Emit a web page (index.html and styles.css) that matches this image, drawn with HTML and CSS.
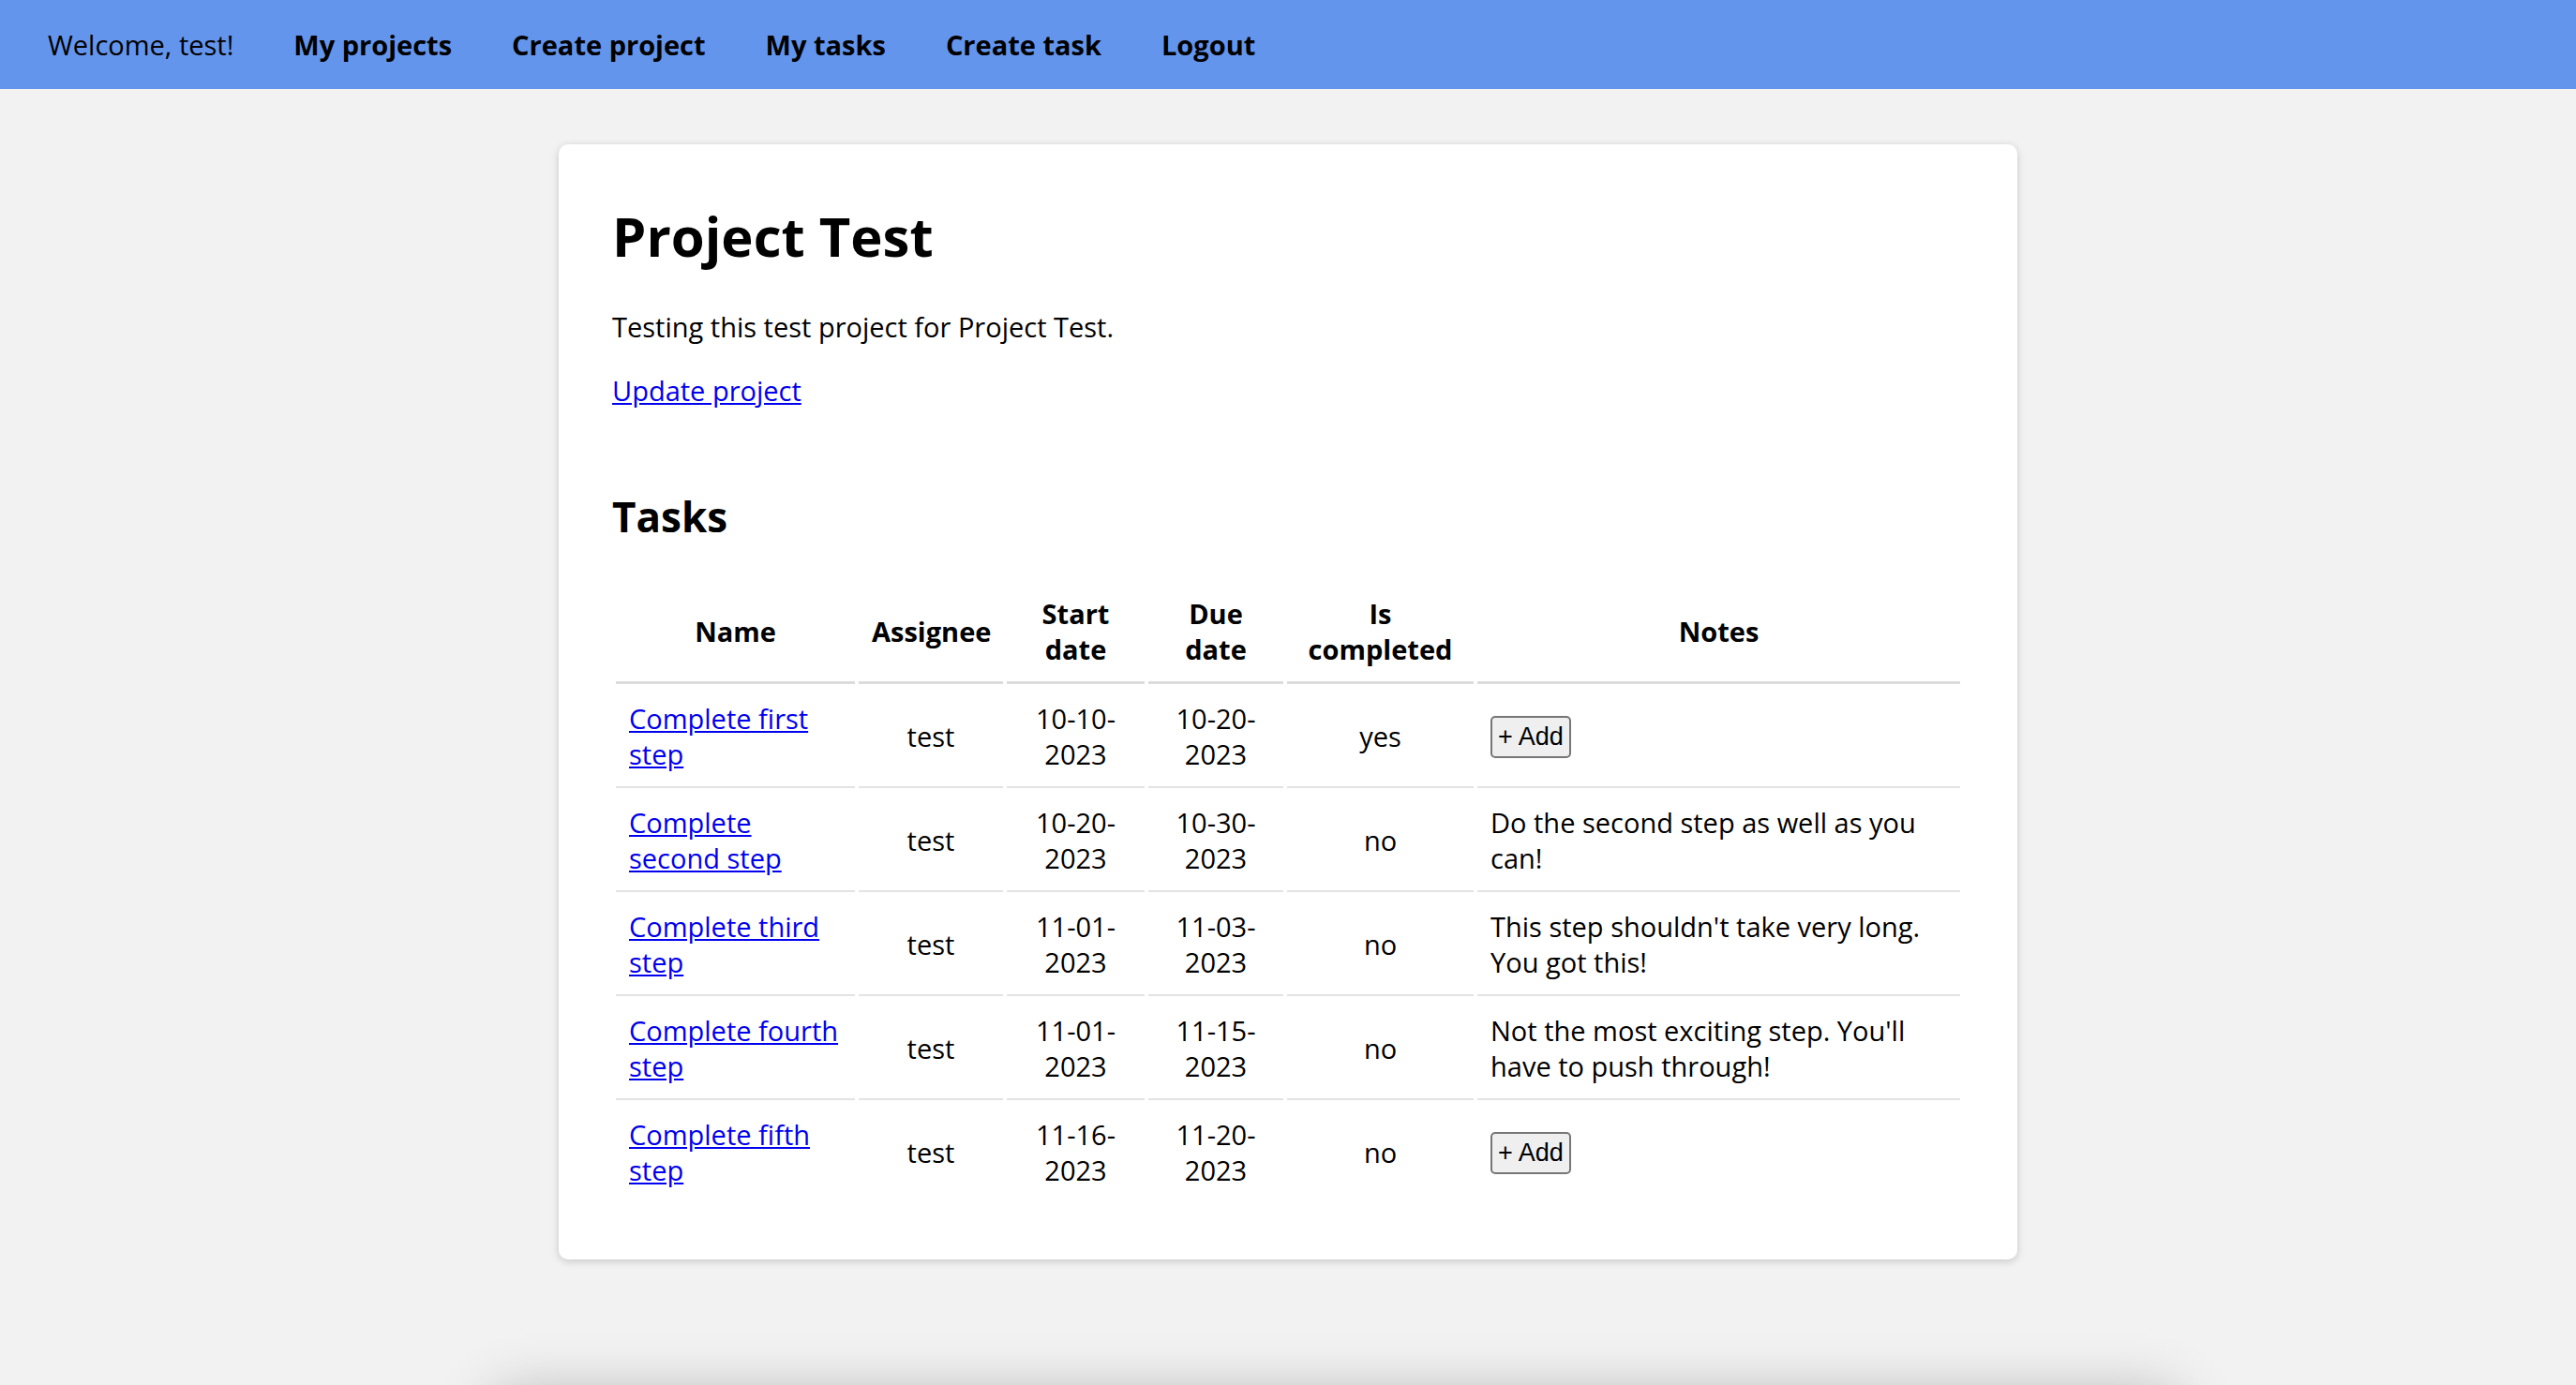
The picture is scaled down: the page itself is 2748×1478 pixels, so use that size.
FILE: index.html
```html
<!DOCTYPE html>
<html lang="en">
<head>
<meta charset="utf-8">
<title>Project Test</title>
<link rel="stylesheet" href="styles.css">
</head>
<body>
<nav class="topnav">
  <span class="welcome">Welcome, test!</span>
  <a class="nav-link" href="#">My projects</a>
  <a class="nav-link" href="#">Create project</a>
  <a class="nav-link" href="#">My tasks</a>
  <a class="nav-link" href="#">Create task</a>
  <a class="nav-link" href="#">Logout</a>
</nav>
<main class="card">
  <h1 class="title">Project Test</h1>
  <p class="desc">Testing this test project for Project Test.</p>
  <a class="link update" href="#">Update project</a>
  <h2 class="subtitle">Tasks</h2>
  <table class="tasks">
    <colgroup>
      <col class="c-name"><col class="c-assignee"><col class="c-start"><col class="c-due"><col class="c-done"><col class="c-notes">
    </colgroup>
    <thead>
      <tr><th>Name</th><th>Assignee</th><th>Start date</th><th>Due date</th><th>Is completed</th><th>Notes</th></tr>
    </thead>
    <tbody>
      <tr><td class="left"><a class="link" href="#">Complete first step</a></td><td>test</td><td>10-10-2023</td><td>10-20-2023</td><td>yes</td><td class="left"><button class="add-btn">+ Add</button></td></tr>
      <tr><td class="left"><a class="link" href="#">Complete second step</a></td><td>test</td><td>10-20-2023</td><td>10-30-2023</td><td>no</td><td class="left">Do the second step as well as you can!</td></tr>
      <tr><td class="left"><a class="link" href="#">Complete third step</a></td><td>test</td><td>11-01-2023</td><td>11-03-2023</td><td>no</td><td class="left">This step shouldn't take very long. You got this!</td></tr>
      <tr><td class="left"><a class="link" href="#">Complete fourth step</a></td><td>test</td><td>11-01-2023</td><td>11-15-2023</td><td>no</td><td class="left">Not the most exciting step. You'll have to push through!</td></tr>
      <tr><td class="left"><a class="link" href="#">Complete fifth step</a></td><td>test</td><td>11-16-2023</td><td>11-20-2023</td><td>no</td><td class="left"><button class="add-btn">+ Add</button></td></tr>
    </tbody>
  </table>
</main>
<footer class="page-foot"></footer>
</body>
</html>
```

FILE: styles.css
```css
html, body {
  overflow: hidden;
}
body {
  margin: 0;
  background: #f2f2f2;
  font-family: "Open Sans", "Noto Sans", sans-serif;
  font-size: 29px;
  color: #000;
}
.topnav {
  height: 95px;
  background: #6495ed;
  display: flex;
  align-items: center;
  gap: 64px;
  padding-left: 51px;
}
.welcome {
  font-weight: 400;
}
.nav-link {
  color: #000;
  text-decoration: none;
  font-weight: 700;
}
.card {
  box-sizing: border-box;
  width: 1556px;
  margin: 59px auto 0;
  padding: 57px;
  background: #fff;
  border-radius: 10px;
  box-shadow: 0 2px 8px rgba(0, 0, 0, 0.18);
}
.title {
  margin: 0 0 35px;
  font-size: 58px;
  font-weight: 700;
  line-height: 82px;
}
.desc {
  margin: 0 0 27px;
  line-height: 41px;
}
.link {
  color: #0000ee;
  text-decoration: underline;
}
.update {
  display: block;
  width: max-content;
  line-height: 41px;
}
.subtitle {
  margin: 83px 0 35px;
  font-size: 44px;
  font-weight: 700;
  line-height: 63px;
}
.tasks {
  table-layout: fixed;
  width: 1442px;
  border-spacing: 4px;
  margin: 0;
  font-size: 29px;
}
.c-name { width: 255px; }
.c-assignee { width: 154px; }
.c-start { width: 147px; }
.c-due { width: 144px; }
.c-done { width: 199px; }
.c-notes { width: 515px; }
.tasks th,
.tasks td {
  padding: 14px 14px 15px;
  text-align: center;
  vertical-align: middle;
  line-height: 38px;
}
.tasks th {
  font-weight: 700;
  border-bottom: 3px solid #dcdcdc;
}
.tasks td {
  border-bottom: 2px solid #e3e3e3;
}
.tasks tbody tr:last-child td {
  border-bottom: none;
}
.tasks td.left {
  text-align: left;
}
.add-btn {
  font-family: "Liberation Sans", Arial, sans-serif;
  font-size: 27px;
  line-height: 31px;
  padding: 5px 6px;
  border: 2px solid #767676;
  border-radius: 5px;
  background: #efefef;
  color: #000;
}
.page-foot {
  width: 1790px;
  height: 200px;
  margin: 148px 0 0 530px;
  background: #f2f2f2;
  box-shadow: 0 0 60px rgba(0, 0, 0, 0.3);
}
```
